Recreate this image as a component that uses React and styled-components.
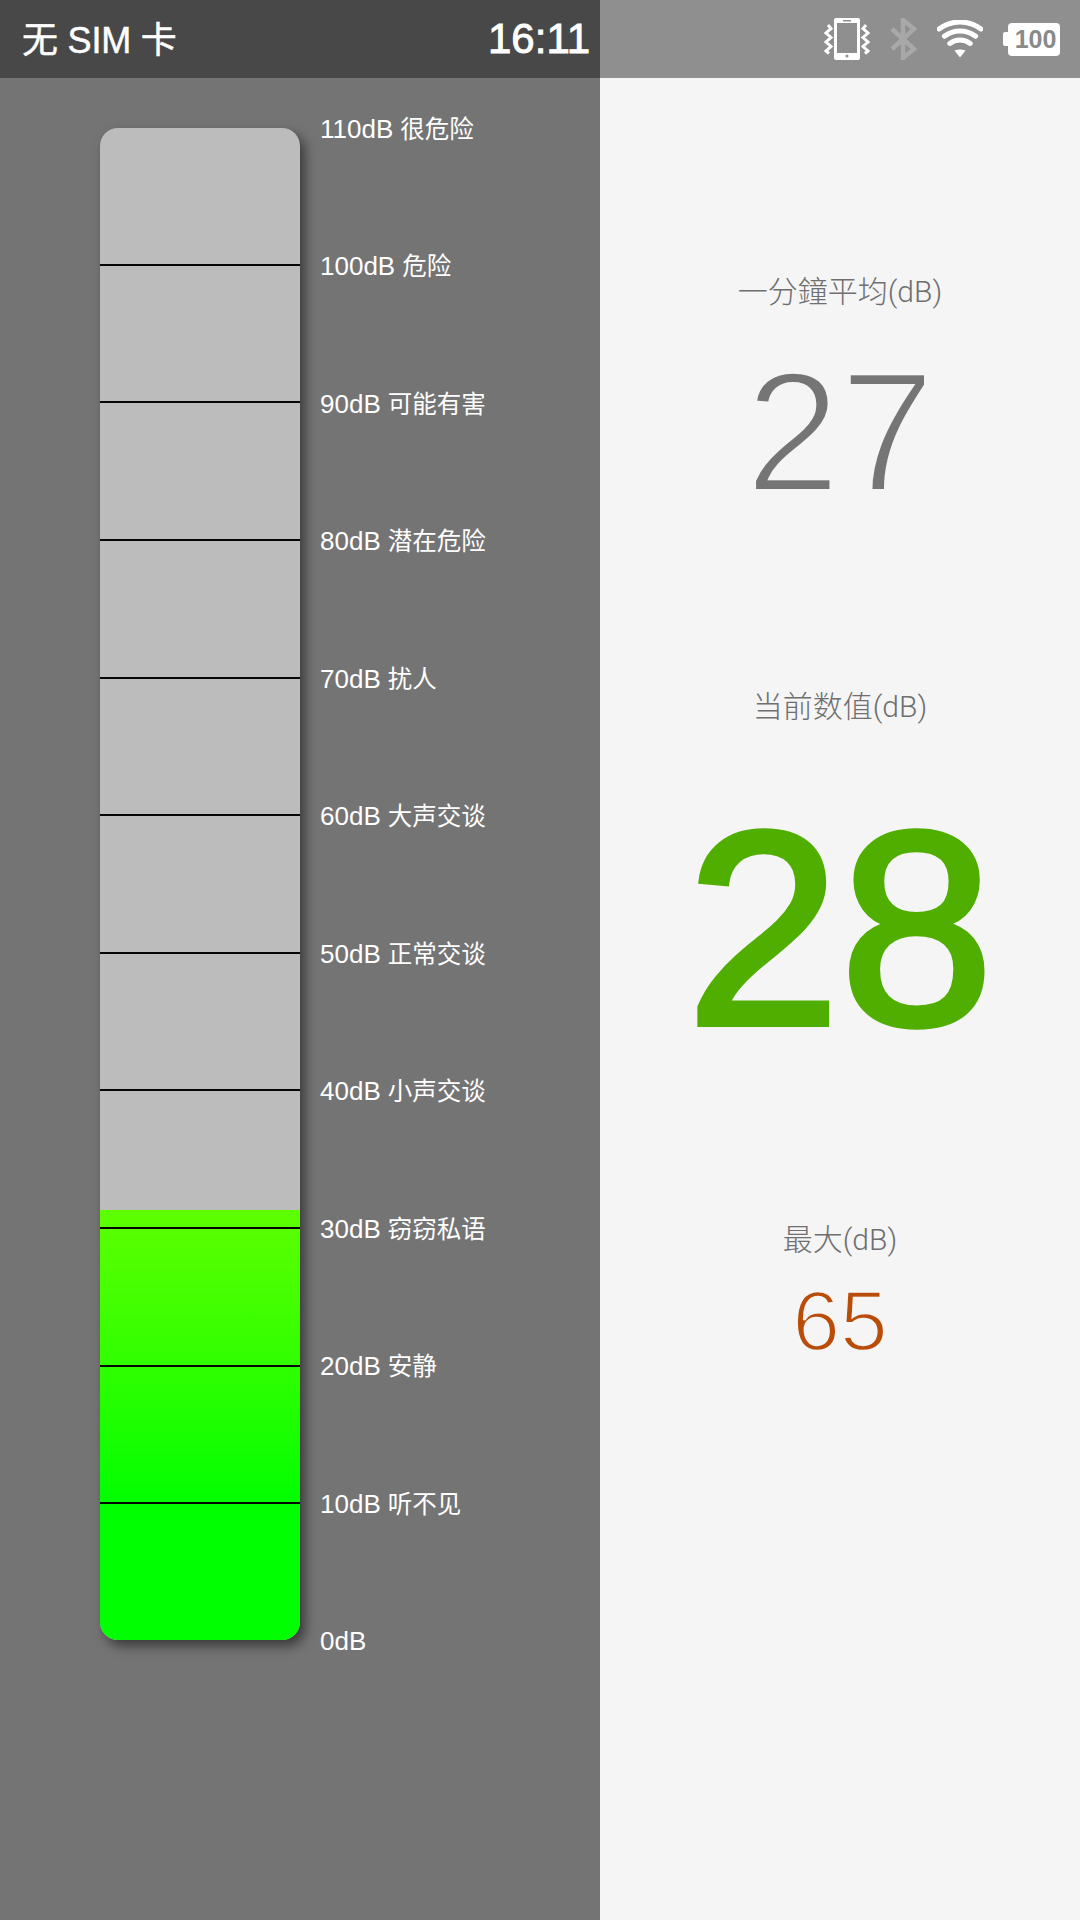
import styled, { createGlobalStyle } from "styled-components";

const SANS = `"Liberation Sans", "Noto Sans CJK SC", sans-serif`;
const LIGHT = `Roboto, "Noto Sans CJK SC", sans-serif`;

const GlobalStyle = createGlobalStyle`
  html, body {
    margin: 0;
    padding: 0;
    background: #f5f5f5;
  }
  * {
    box-sizing: border-box;
  }
`;

const Page = styled.div`
  width: 1080px;
  height: 1920px;
  overflow: hidden;
  display: grid;
  grid-template-columns: 600px 480px;
  grid-template-rows: 78px 1fr;
  font-family: ${SANS};
`;

const StatusLeft = styled.div`
  background: #484848;
  color: #fff;
  display: flex;
  align-items: center;
  justify-content: space-between;
  padding: 0 10px 4px 22px;
`;

const Carrier = styled.span`
  font-size: 36px;
  letter-spacing: -0.2px;
  -webkit-text-stroke: 0.5px #fff;
`;

const Clock = styled.span`
  font-size: 42px;
  margin-top: 4px;
  -webkit-text-stroke: 0.9px #fff;
`;

const StatusRight = styled.div`
  background: #8f8f8f;
  display: flex;
  align-items: center;
  justify-content: flex-end;
  gap: 20px;
  padding-right: 20px;
`;

const Battery = styled.div`
  display: flex;
  align-items: center;
`;

const BatteryNub = styled.div`
  width: 5px;
  height: 14px;
  background: #fff;
  border-radius: 2px 0 0 2px;
`;

const BatteryBody = styled.div`
  width: 52px;
  height: 33px;
  background: #fff;
  border-radius: 4px;
  color: #8a8a8a;
  font-size: 25px;
  font-weight: 700;
  line-height: 33px;
  text-align: center;
  padding-left: 3px;
`;

const MeterPanel = styled.div`
  background: #747474;
  display: flex;
  align-items: flex-start;
  padding: 50px 0 0 100px;
`;

const Tube = styled.div`
  position: relative;
  width: 200px;
  height: 1512px;
  flex: none;
  background: #bcbcbc;
  border-radius: 18px;
  box-shadow: 5px 6px 12px rgba(0, 0, 0, 0.5);
  overflow: hidden;
`;

const Level = styled.div`
  position: absolute;
  left: 0;
  right: 0;
  bottom: 0;
  background: linear-gradient(to bottom, #5eff00 0%, #30ff00 36%, #00ff00 70%);
`;

const Segments = styled.div`
  position: relative;
  height: 100%;
  display: flex;
  flex-direction: column;
`;

const Segment = styled.div`
  flex: 1;
  border-bottom: 2px solid #050505;

  &:last-child {
    border-bottom: 0;
  }
`;

const Scale = styled.div`
  height: 1542px;
  margin: -14px 0 0 20px;
  display: flex;
  flex-direction: column;
  justify-content: space-between;
`;

const ScaleLabel = styled.div`
  height: 30px;
  line-height: 30px;
  font-size: 26px;
  color: #fff;
  white-space: nowrap;
`;

const ScaleName = styled.span`
  font-size: 24.500px;
  margin-left: 7px;
`;

const StatsPanel = styled.div`
  background: #f5f5f5;
  display: flex;
  flex-direction: column;
  align-items: center;
  padding-top: 194px;
`;

const Stat = styled.div`
  display: flex;
  flex-direction: column;
  align-items: center;
  margin-bottom: ${(p) => p.$after}px;
`;

const StatTitle = styled.div`
  height: 40px;
  line-height: 40px;
  font-family: ${LIGHT};
  font-size: 30px;
  font-weight: 300;
  color: #6f6f6f;
  white-space: nowrap;
  margin-bottom: ${(p) => p.$gap}px;
`;

const StatValue = styled.div`
  font-size: ${(p) => p.$size}px;
  line-height: ${(p) => p.$line}px;
  color: ${(p) => p.$color};
  -webkit-text-stroke: ${(p) => p.$stroke};
`;

const levels = [
  ["110dB", "很危险"],
  ["100dB", "危险"],
  ["90dB", "可能有害"],
  ["80dB", "潜在危险"],
  ["70dB", "扰人"],
  ["60dB", "大声交谈"],
  ["50dB", "正常交谈"],
  ["40dB", "小声交谈"],
  ["30dB", "窃窃私语"],
  ["20dB", "安静"],
  ["10dB", "听不见"],
  ["0dB", ""],
];

const VibrateIcon = () => (
  <svg width="46" height="42" viewBox="0 0 46 42">
    <path
      fill="#fff"
      fillRule="evenodd"
      d="M12 0h22a2 2 0 0 1 2 2v38a2 2 0 0 1-2 2H12a2 2 0 0 1-2-2V2a2 2 0 0 1 2-2zM13 5v30h20V5zM19 2v1.500h8V2zM23 36.500a1.500 1.500 0 1 0 0 3 1.500 1.500 0 0 0 0-3z"
    />
    <path
      fill="none"
      stroke="#fff"
      strokeWidth="3"
      d="M4 7l3 3.500-5 4.500 5 4.500-5 4.500 5 4.500-5 4.500 3 2.500M42 7l-3 3.500 5 4.500-5 4.500 5 4.500-5 4.500 5 4.500-3 2.500"
    />
  </svg>
);

const BluetoothIcon = () => (
  <svg width="27" height="42" viewBox="0 0 27 42">
    <path
      fill="none"
      stroke="#a8a8a8"
      strokeWidth="4.500"
      d="M2 11l22 20-11 9V2l11 9L2 31"
    />
  </svg>
);

const WifiIcon = () => (
  <svg width="46" height="38" viewBox="0 0 46 38">
    <g fill="none" stroke="#fff" strokeWidth="5" strokeLinecap="round">
      <path d="M2 9A35 35 0 0 1 44 9" />
      <path d="M7.400 16.200A26 26 0 0 1 38.600 16.200" />
      <path d="M12.800 23.400A17 17 0 0 1 33.200 23.400" />
    </g>
    <path fill="#fff" d="M17.500 30.500Q23 28.500 28.500 30.500L23 37.500Z" />
  </svg>
);

const App = () => (
  <Page>
    <GlobalStyle />
    <StatusLeft>
      <Carrier>无 SIM 卡</Carrier>
      <Clock>16:11</Clock>
    </StatusLeft>
    <StatusRight>
      <VibrateIcon />
      <BluetoothIcon />
      <WifiIcon />
      <Battery>
        <BatteryNub />
        <BatteryBody>100</BatteryBody>
      </Battery>
    </StatusRight>

    <MeterPanel>
      <Tube>
        <Level style={{ height: "430px" }} />
        <Segments>
          {levels.slice(1).map(([db]) => (
            <Segment key={db} />
          ))}
        </Segments>
      </Tube>
      <Scale>
        {levels.map(([db, name]) => (
          <ScaleLabel key={db}>
            {db}
            {name && <ScaleName>{name}</ScaleName>}
          </ScaleLabel>
        ))}
      </Scale>
    </MeterPanel>

    <StatsPanel>
      {/* thin strokes: a background-coloured outline takes weight off the digits */}
      <Stat $after={155}>
        <StatTitle $gap={20}>一分鐘平均(dB)</StatTitle>
        <StatValue $size={170} $line={200} $color="#757575" $stroke="4px #f5f5f5">
          27
        </StatValue>
      </Stat>
      <Stat $after={142}>
        <StatTitle $gap={51}>当前数值(dB)</StatTitle>
        <StatValue $size={276} $line={300} $color="#50ae00" $stroke="6px #50ae00">
          28
        </StatValue>
      </Stat>
      <Stat>
        <StatTitle $gap={10}>最大(dB)</StatTitle>
        <StatValue $size={86} $line={100} $color="#b94c08" $stroke="2.500px #f5f5f5">
          65
        </StatValue>
      </Stat>
    </StatsPanel>
  </Page>
);

export default App;
